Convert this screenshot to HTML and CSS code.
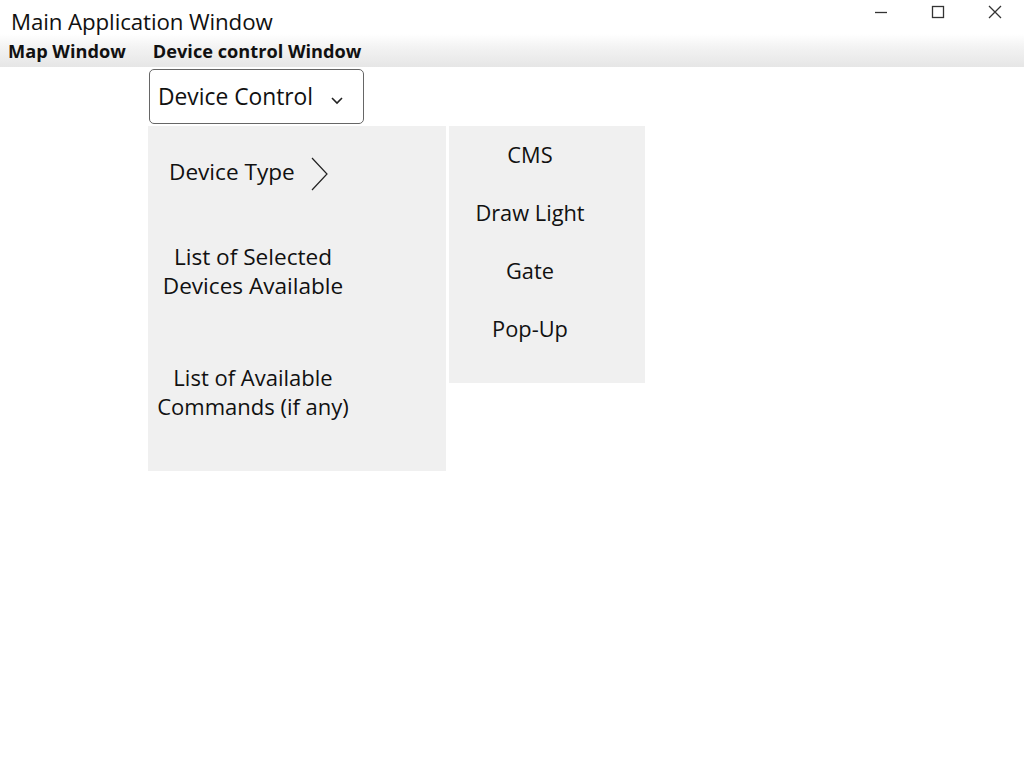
FILE: index.html
```html
<!DOCTYPE html>
<html>
<head>
<meta charset="utf-8">
<link rel="stylesheet" href="styles.css">
</head>
<body>
<div class="titlebar">
  <div class="title">Main Application Window</div>
  <div class="controls">
    <svg class="ctl min" width="14" height="14" viewBox="0 0 14 14"><path d="M1 7.5H13" stroke="#333" stroke-width="1.3"/></svg>
    <svg class="ctl max" width="14" height="14" viewBox="0 0 14 14"><rect x="1.5" y="1.5" width="11" height="11" fill="none" stroke="#333" stroke-width="1.3"/></svg>
    <svg class="ctl close" width="14" height="14" viewBox="0 0 14 14"><path d="M1 1L13 13M13 1L1 13" stroke="#333" stroke-width="1.3"/></svg>
  </div>
</div>
<div class="menubar">
  <span class="menu-item first">Map Window</span>
  <span class="menu-item">Device control Window</span>
</div>
<div class="content">
  <div class="select">
    <span>Device Control</span>
    <svg width="14" height="10" viewBox="0 0 14 10"><path d="M2 3L7 8L12 3" fill="none" stroke="#222" stroke-width="1.6"/></svg>
  </div>
  <div class="panels">
    <div class="panel left">
      <div class="row type">
        <span>Device Type</span>
        <svg width="20" height="34" viewBox="0 0 20 34"><path d="M2 1L17 17L2 33" fill="none" stroke="#222" stroke-width="1.2"/></svg>
      </div>
      <div class="row block sel">List of Selected<br>Devices Available</div>
      <div class="row block cmd">List of Available<br>Commands (if any)</div>
    </div>
    <div class="panel right">
      <div class="opt">CMS</div>
      <div class="opt">Draw Light</div>
      <div class="opt">Gate</div>
      <div class="opt">Pop-Up</div>
    </div>
  </div>
</div>
</body>
</html>
```
FILE: styles.css
```css
html, body {
  margin: 0;
  padding: 0;
  background: #ffffff;
  font-family: "Open Sans", "DejaVu Sans", sans-serif;
  color: #111;
}
.titlebar {
  height: 34px;
  display: flex;
  align-items: flex-start;
  justify-content: space-between;
}
.title {
  font-size: 22.3px;
  padding-left: 11px;
  padding-top: 7px;
  line-height: 30px;
  height: 27px;
  letter-spacing: -0.1px;
}
.controls {
  display: flex;
  align-items: center;
  gap: 43px;
  padding-top: 5px;
  padding-right: 22px;
}
.ctl { display: block; }
.menubar {
  height: 33px;
  background: linear-gradient(#ffffff 0%, #f3f3f3 40%, #e6e6e6 100%);
  display: flex;
  align-items: center;
  font-weight: bold;
  font-size: 18.2px;
  padding-top: 1px;
  box-sizing: border-box;
}
.menu-item.first { padding-left: 8px; margin-right: 27px; }
.content {
  padding-left: 148px;
  padding-top: 2px;
}
.select {
  width: 215px;
  height: 55px;
  box-sizing: border-box;
  margin-left: 1px;
  border: 1px solid #666;
  border-radius: 5px;
  display: flex;
  align-items: center;
  padding-left: 8px;
  font-size: 22.8px;
}
.select span { margin-right: 17px; }
.select svg { margin-top: 6px; }
.panels {
  display: flex;
  gap: 3px;
  margin-top: 2px;
  align-items: flex-start;
}
.panel {
  background: #f0f0f0;
}
.left {
  width: 298px;
  height: 345px;
  font-size: 22.6px;
}
.right {
  width: 196px;
  height: 257px;
  display: flex;
  flex-direction: column;
  align-items: flex-start;
  padding-top: 14px;
  box-sizing: border-box;
  font-size: 21.8px;
}
.opt {
  width: 162px;
  text-align: center;
  line-height: 30px;
  height: 58px;
}
.row.type {
  display: flex;
  align-items: center;
  padding-left: 21px;
  padding-top: 25px;
}
.row.type span { margin-right: 15px; }
.row.type svg { margin-top: 6px; }
.block {
  width: 210px;
  text-align: center;
  line-height: 29px;
}
.sel { margin-top: 51px; }
.cmd { margin-top: 63px; }
.cmd { font-size: 22px; }
```
